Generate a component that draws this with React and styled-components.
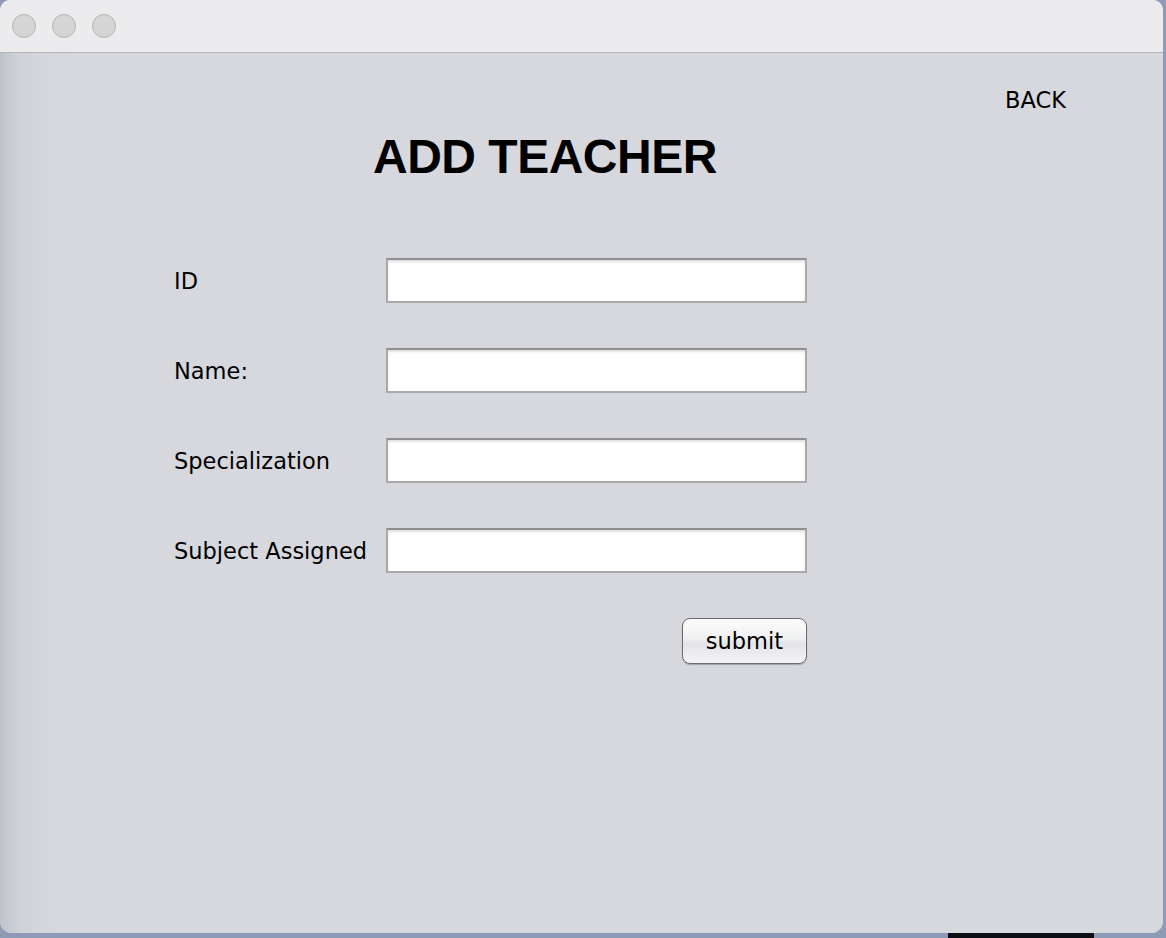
import { Fragment } from "react";
import styled, { createGlobalStyle } from "styled-components";

const GlobalStyle = createGlobalStyle`
  html, body {
    margin: 0;
    padding: 0;
    background: #8e9ab6;
    overflow: hidden;
  }
  * { box-sizing: border-box; }
`;

const Desktop = styled.div`
  width: 1166px;
  height: 938px;
  display: flex;
  flex-direction: column;
`;

const Window = styled.div`
  width: 1163px;
  height: 933px;
  border-radius: 10px 10px 12px 12px;
  overflow: hidden;
  display: flex;
  flex-direction: column;
  background: #d6d8de;
  font-family: "Lucida Grande", "DejaVu Sans", sans-serif;
  color: #000;
`;

const TitleBar = styled.div`
  height: 53px;
  flex: none;
  display: flex;
  align-items: center;
  gap: 16px;
  padding: 0 0 1px 12px;
  background: #ececee;
  border-bottom: 1px solid #b4b4b8;
`;

const Light = styled.span`
  width: 24px;
  height: 24px;
  border-radius: 50%;
  background: #d5d5d5;
  border: 1px solid #b6b6b6;
`;

const Content = styled.div`
  flex: 1;
  display: flex;
  flex-direction: column;
  background: linear-gradient(to right, #bfc3cb 0px, #cfd2d8 20px, #d5d7dd 50px, #d6d8de 80px);
`;

const TopRow = styled.div`
  display: flex;
  justify-content: flex-end;
  padding: 32px 97px 0 0;
  height: 74px;
`;

const BackLink = styled.span`
  font-size: 22.5px;
  line-height: 30px;
`;

const Title = styled.h1`
  margin: 0;
  padding-left: 373px;
  font-family: "Liberation Sans", Arial, sans-serif;
  font-weight: bold;
  font-size: 48px;
  letter-spacing: -0.5px;
  line-height: 60px;
`;

const Form = styled.div`
  display: grid;
  grid-template-columns: 212px 421px;
  row-gap: 45px;
  padding: 71px 0 0 174px;
`;

const Label = styled.label`
  font-size: 22.5px;
  display: flex;
  align-items: center;
  white-space: nowrap;
`;

const Field = styled.input`
  height: 45px;
  width: 421px;
  border: 2px solid #a9a9ab;
  border-top-color: #8f8f91;
  background: #fff;
  box-shadow: inset 0 2px 2px rgba(0, 0, 0, 0.12);
  outline: none;
  font-family: inherit;
  font-size: 20px;
  padding: 0 8px;
`;

const Actions = styled.div`
  grid-column: 2;
  display: flex;
  justify-content: flex-end;
`;

const Button = styled.button`
  width: 125px;
  height: 46px;
  border-radius: 8px;
  border: 1px solid #6c6c70;
  background: linear-gradient(to bottom, #fdfdfd 0%, #f0f0f2 45%, #e4e4e8 55%, #f4f4f6 100%);
  box-shadow: 0 1px 1px rgba(0, 0, 0, 0.25);
  font-family: "Lucida Grande", "DejaVu Sans", sans-serif;
  font-size: 22.5px;
  color: #000;
  padding: 0;
`;

const BottomStrip = styled.div`
  flex: 1;
  display: flex;
`;

const DarkThing = styled.div`
  margin-left: 948px;
  width: 146px;
  background: #0d0d14;
`;

const fields = ["ID", "Name:", "Specialization", "Subject Assigned"];

export default function App() {
  return (
    <Desktop>
      <GlobalStyle />
      <Window>
        <TitleBar>
          <Light />
          <Light />
          <Light />
        </TitleBar>
        <Content>
          <TopRow>
            <BackLink>BACK</BackLink>
          </TopRow>
          <Title>ADD TEACHER</Title>
          <Form>
            {fields.map((f) => (
              <Fragment key={f}>
                <Label>{f}</Label>
                <Field type="text" />
              </Fragment>
            ))}
            <Actions>
              <Button>submit</Button>
            </Actions>
          </Form>
        </Content>
      </Window>
      <BottomStrip>
        <DarkThing />
      </BottomStrip>
    </Desktop>
  );
}
